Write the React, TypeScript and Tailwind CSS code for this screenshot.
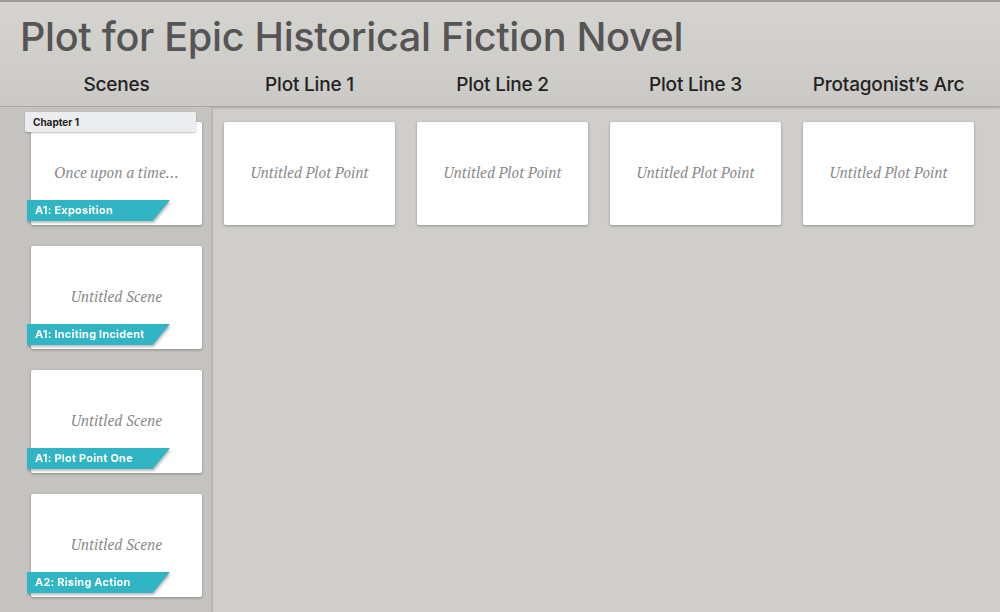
import React from 'react';

const columns = ['Scenes', 'Plot Line 1', 'Plot Line 2', 'Plot Line 3', 'Protagonist\u2019s Arc'];

const scenes = [
  { title: 'Once upon a time\u2026', beat: 'A1: Exposition', chapter: 'Chapter 1' },
  { title: 'Untitled Scene', beat: 'A1: Inciting Incident' },
  { title: 'Untitled Scene', beat: 'A1: Plot Point One' },
  { title: 'Untitled Scene', beat: 'A2: Rising Action' },
];

const serif = { fontFamily: '"PT Serif", "Liberation Serif", "DejaVu Serif", serif' };

function Ribbon({ label }: { label: string }) {
  return (
    <div className="absolute left-[-4px] bottom-[4px] h-[21px] w-[143px] drop-shadow-[1px_2px_1px_rgba(0,0,0,0.25)]">
      <div className="h-full w-full bg-[#31b5c4] [clip-path:polygon(0_0,100%_0,88%_100%,0_100%)] flex items-center pl-[8px]">
        <span className="text-white text-[11px] font-bold tracking-[0.2px]">{label}</span>
      </div>
    </div>
  );
}

function SceneCard({ title, beat, chapter }: { title: string; beat: string; chapter?: string }) {
  return (
    <div className="relative">
      {chapter && (
        <div className="absolute left-[-6px] top-[-10px] z-10 w-[171px] h-[20px] bg-[#ecedef] rounded-[2px] shadow-[0_1px_2px_rgba(0,0,0,0.25)] flex items-center pl-[8px]">
          <span className="text-[10px] font-bold text-[#222]">{chapter}</span>
        </div>
      )}
      <div className="relative w-[171px] h-[103px] bg-white rounded-[2px] shadow-[0_1px_3px_rgba(0,0,0,0.3)] flex items-center justify-center pb-[2px]">
        <span className="italic text-[15px] text-[#8a8a8a]" style={serif}>{title}</span>
        <Ribbon label={beat} />
      </div>
    </div>
  );
}

function PlotCard() {
  return (
    <div className="w-[171px] h-[103px] bg-white rounded-[2px] shadow-[0_1px_3px_rgba(0,0,0,0.3)] flex items-center justify-center pb-[2px]">
      <span className="italic text-[15px] text-[#8a8a8a]" style={serif}>Untitled Plot Point</span>
    </div>
  );
}

export default function App() {
  return (
    <div className="w-[1000px] h-[612px] overflow-hidden bg-[#d0cecb] flex flex-col" style={{ fontFamily: 'Inter, "Liberation Sans", sans-serif' }}>
      {/* Header */}
      <div className="h-[107px] shrink-0 border-t-[2px] border-[#9c9a97] bg-gradient-to-b from-[#d6d4d1] to-[#cbc9c5] border-b border-b-[#a9a7a3] shadow-[0_1px_2px_rgba(0,0,0,0.2)] flex flex-col">
        <h1 className="pl-[20px] pt-[11px] h-[56px] text-[39.6px] leading-[48px] font-medium text-[#555555] tracking-[-0.3px]">
          Plot for Epic Historical Fiction Novel
        </h1>
        <div className="flex pl-[20px] pt-[13px]">
          {columns.map((c) => (
            <div key={c} className="w-[193px] text-center text-[19px] font-medium text-[#222222] tracking-[-0.2px]">
              {c}
            </div>
          ))}
        </div>
      </div>

      {/* Board */}
      <div className="flex flex-1 min-h-0">
        <div className="w-[213px] shrink-0 bg-[#c5c3bf] border-r-[2px] border-[#b9b7b3] pl-[31px] pt-[15px] flex flex-col gap-[21px]">
          {scenes.map((s, i) => (
            <SceneCard key={i} {...s} />
          ))}
        </div>
        <div className="flex-1 pl-[11px] pt-[15px] flex gap-[22px] items-start">
          <PlotCard />
          <PlotCard />
          <PlotCard />
          <PlotCard />
        </div>
      </div>
    </div>
  );
}
